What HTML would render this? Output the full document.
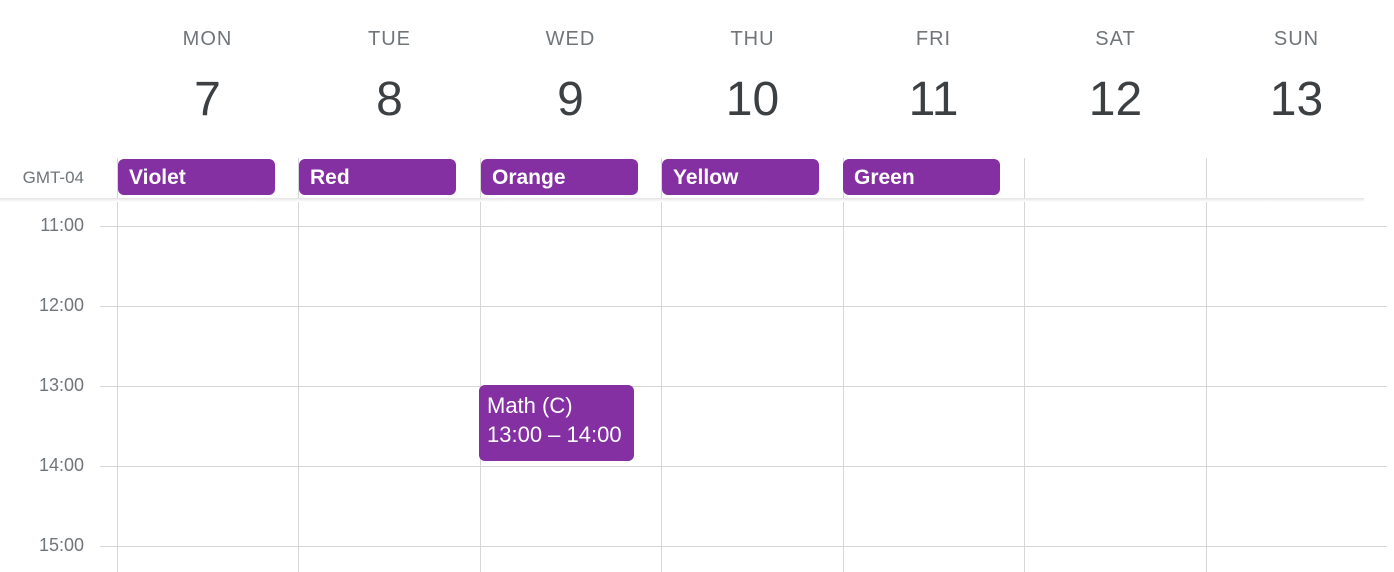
<!DOCTYPE html>
<html><head><style>
body{margin:0;width:1394px;height:572px;background:#fff;font-family:"Liberation Sans",Arial,sans-serif;position:relative;overflow:hidden}
.a{position:absolute}
.dn{position:absolute;top:28px;width:181px;text-align:center;font-size:20px;letter-spacing:1px;color:#70757a}
.dd{position:absolute;top:72px;width:181px;text-align:center;font-size:48px;color:#3c4043}
.v{position:absolute;width:1px;background:#d6d6d9;top:158px;bottom:0}
.h{position:absolute;height:1px;background:#d6d6d9;left:100px;right:7px}
.t{position:absolute;left:0;width:84px;text-align:right;font-size:18px;color:#70757a}
.chip{position:absolute;top:159px;height:36px;width:157px;background:#8430a3;border-radius:6px;color:#fff;font-weight:bold;font-size:21px;line-height:37px;box-sizing:border-box;padding-left:11px}
</style></head><body>
<div class="dn" style="left:117px">MON</div><div class="dd" style="left:117px">7</div>
<div class="dn" style="left:299px">TUE</div><div class="dd" style="left:299px">8</div>
<div class="dn" style="left:480px">WED</div><div class="dd" style="left:480px">9</div>
<div class="dn" style="left:662px">THU</div><div class="dd" style="left:662px">10</div>
<div class="dn" style="left:843px">FRI</div><div class="dd" style="left:843px">11</div>
<div class="dn" style="left:1025px">SAT</div><div class="dd" style="left:1025px">12</div>
<div class="dn" style="left:1206px">SUN</div><div class="dd" style="left:1206px">13</div>
<div class="v" style="left:117px"></div><div class="v" style="left:298px"></div><div class="v" style="left:480px"></div><div class="v" style="left:661px"></div><div class="v" style="left:843px"></div><div class="v" style="left:1024px"></div><div class="v" style="left:1206px"></div>
<div class="a" style="left:0;right:30px;top:198px;height:4px;background:linear-gradient(#e4e4e4,#fff)"></div>
<div class="t" style="top:168px;font-size:17px">GMT-04</div>
<div class="h" style="top:226px"></div><div class="h" style="top:306px"></div><div class="h" style="top:386px"></div><div class="h" style="top:466px"></div><div class="h" style="top:546px"></div>
<div class="t" style="top:215px">11:00</div>
<div class="t" style="top:295px">12:00</div>
<div class="t" style="top:375px">13:00</div>
<div class="t" style="top:455px">14:00</div>
<div class="t" style="top:535px">15:00</div>
<div class="chip" style="left:118px">Violet</div>
<div class="chip" style="left:299px">Red</div>
<div class="chip" style="left:481px">Orange</div>
<div class="chip" style="left:662px">Yellow</div>
<div class="chip" style="left:843px">Green</div>
<div class="a" style="left:479px;top:385px;width:155px;height:76px;background:#8430a3;border-radius:6px;color:#fff;font-size:22px;line-height:29px;box-sizing:border-box;padding:6px 0 0 8px;overflow:hidden;white-space:nowrap">Math (C)<br>13:00 – 14:00</div>
</body></html>
